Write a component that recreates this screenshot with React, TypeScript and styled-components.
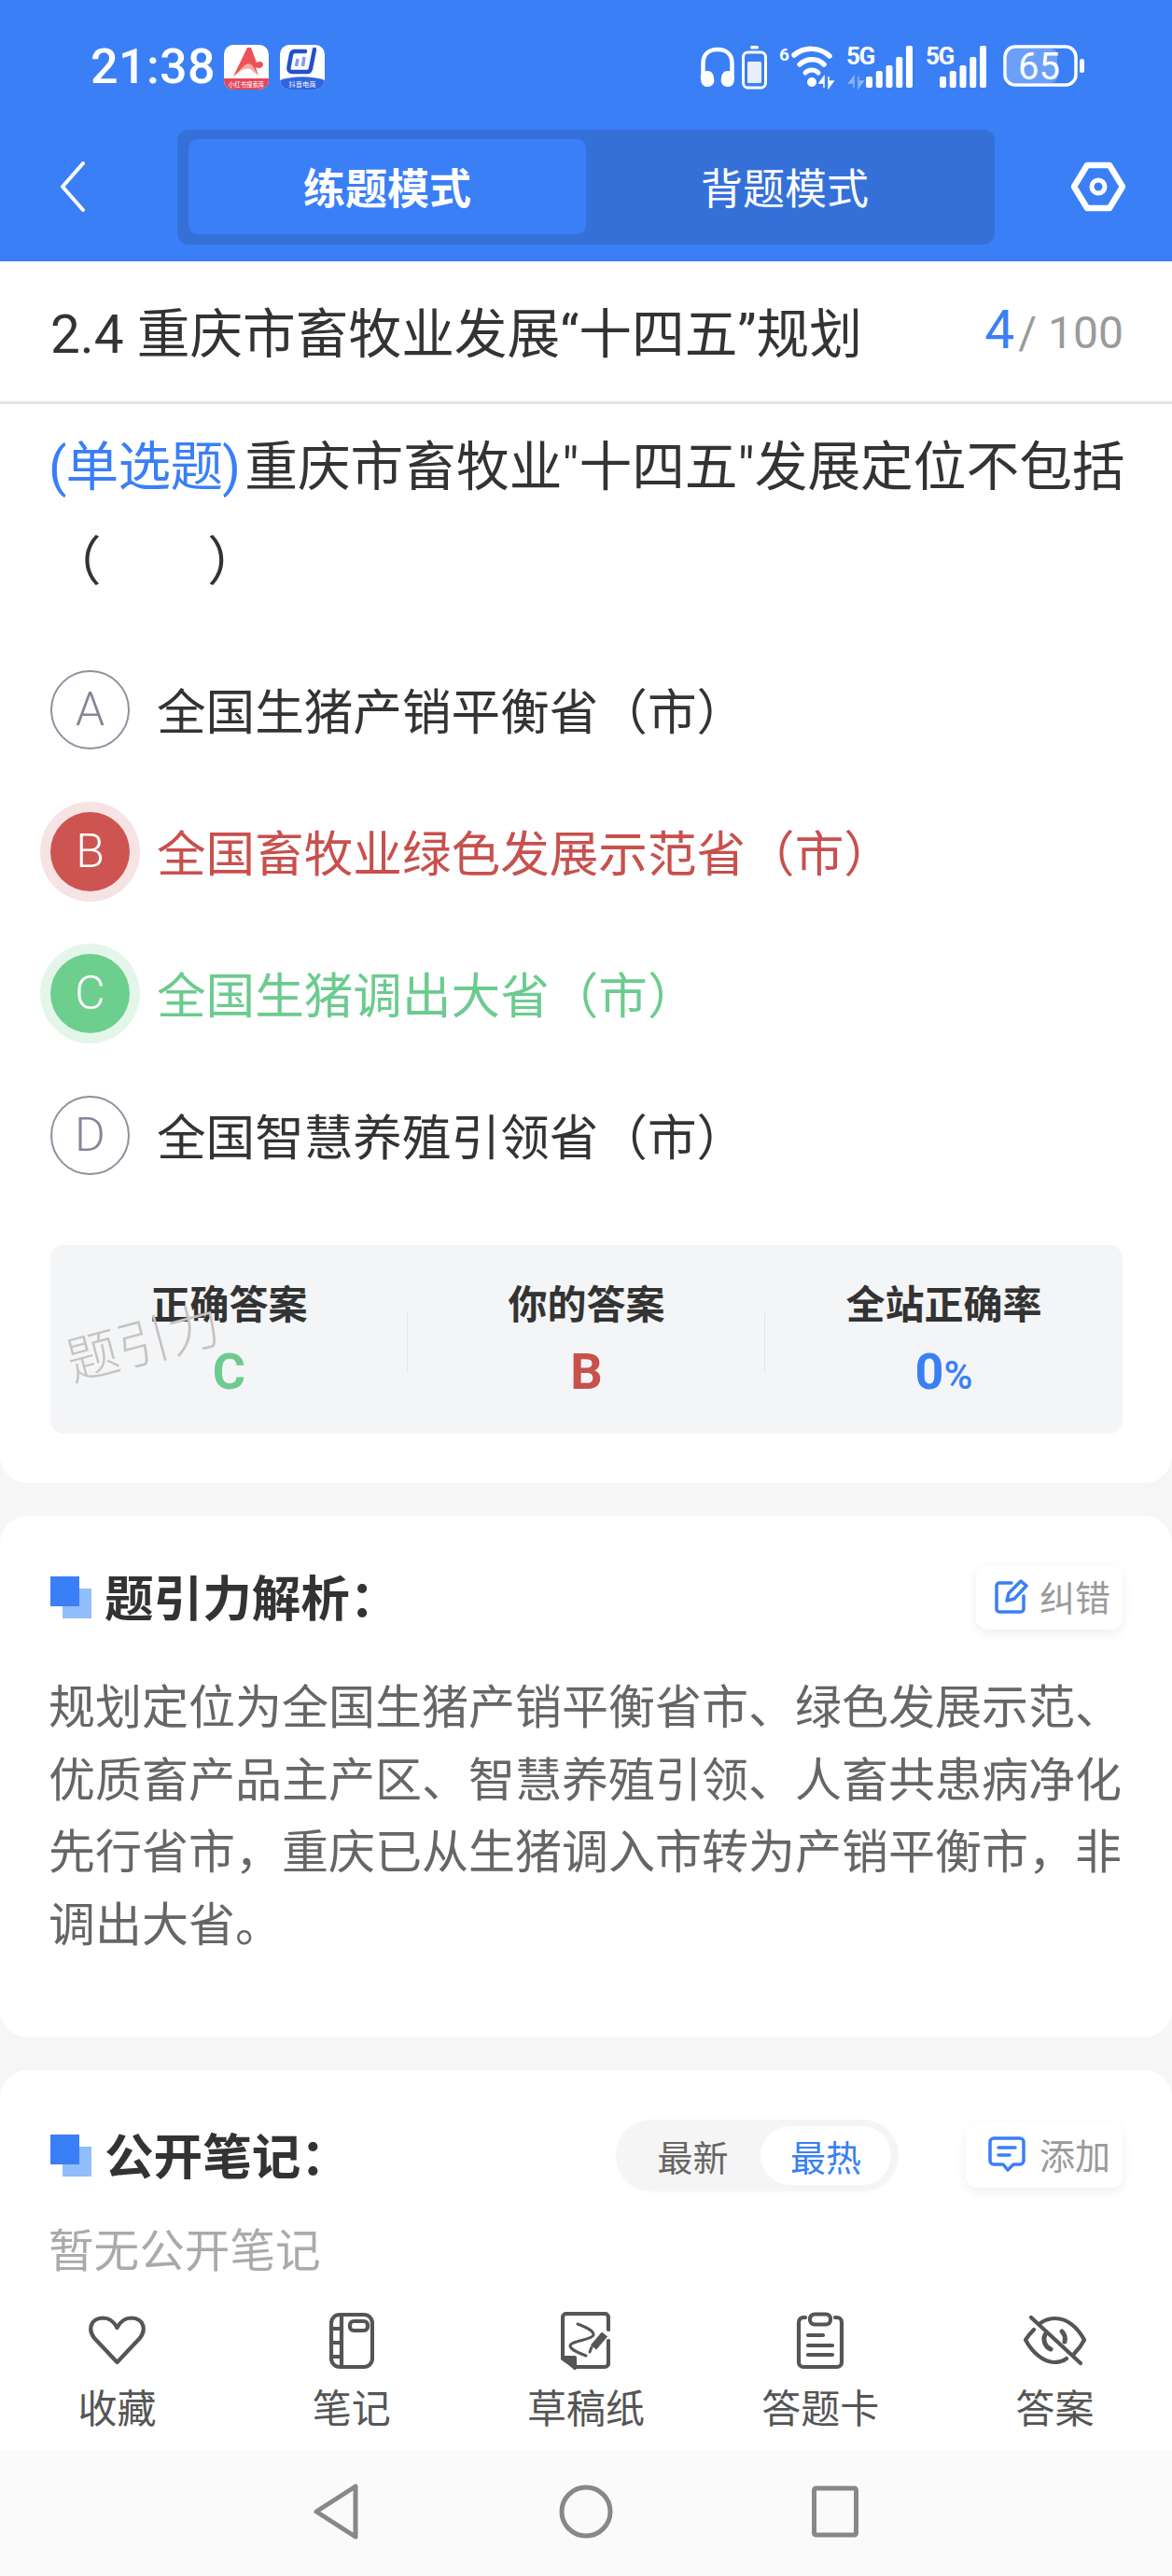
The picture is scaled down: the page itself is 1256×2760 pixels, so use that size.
import * as React from "react";
import styled, { createGlobalStyle } from "styled-components";

const blue = "#3a7ff6";
const red = "#c8504d";
const green = "#6ccb8e";

const GlobalStyle = createGlobalStyle`
  html, body {
    margin: 0;
    padding: 0;
    background: #f6f6f6;
  }
  body {
    font-family: Roboto, "Noto Sans CJK SC", sans-serif;
    color: #333;
  }
`;

const Page = styled.div`
  width: 1256px;
  height: 2760px;
  display: flex;
  flex-direction: column;
  overflow: hidden;
  background: #f6f6f6;
`;

const Scroll = styled.div`
  flex: 1;
  min-height: 0;
  overflow: hidden;
`;

const Header = styled.header`
  height: 280px;
  background: ${blue};
  color: #fff;
`;

const StatusBar = styled.div`
  height: 138px;
  box-sizing: border-box;
  padding: 48px 0 0 97px;
  display: flex;
  align-items: flex-start;
`;

const Clock = styled.div`
  width: 143px;
  font-size: 52px;
  line-height: 48px;
  font-weight: 500;
  letter-spacing: 0.4px;
`;

const AppIcon = styled.svg`
  display: block;
  width: 48px;
  height: 48px;
  margin-right: 12px;
`;

const StatusIcons = styled.div`
  margin-left: auto;
  margin-right: 94px;
  display: flex;
  align-items: flex-start;
`;

const StatusSvg = styled.svg<{ $gap?: number }>`
  display: block;
  height: 48px;
  margin-left: ${(p) => p.$gap ?? 0}px;
  flex: none;
  overflow: visible;
`;

const NavRow = styled.div`
  height: 124px;
  padding-left: 64px;
  display: flex;
  align-items: center;
`;

const Tabs = styled.div`
  width: 876px;
  height: 123px;
  margin-left: 98px;
  margin-right: 81px;
  box-sizing: border-box;
  padding: 10px 12px 11px;
  display: flex;
  background: #3570d9;
  border-radius: 12px;
`;

const Tab = styled.div<{ $active?: boolean }>`
  flex: 1;
  display: flex;
  align-items: center;
  justify-content: center;
  font-size: 45px;
  font-weight: ${(p) => (p.$active ? 700 : 400)};
  background: ${(p) => (p.$active ? blue : "transparent")};
  border-radius: 10px;
`;

const QuestionCard = styled.section`
  background: #fff;
  border-radius: 0 0 30px 30px;
  padding-bottom: 53px;
`;

const TitleRow = styled.div`
  height: 153px;
  box-sizing: border-box;
  padding: 0 52px 4px 54px;
  display: flex;
  align-items: center;
  justify-content: space-between;
  border-bottom: 3px solid #e2e2e2;
`;

const ChapterTitle = styled.div`
  font-size: 56.7px;
  color: #333;
`;

const Progress = styled.div`
  display: flex;
  align-items: baseline;
  font-size: 48px;
  color: #9a9a9a;
`;

const ProgressNow = styled.span`
  font-size: 57px;
  color: ${blue};
  margin-right: 4px;
`;

const ProgressSlash = styled.span`
  margin-right: 12px;
`;

const Question = styled.div`
  padding: 17px 48px 0 52px;
  font-size: 56.7px;
  line-height: 101px;
  color: #333;
`;

const QuestionType = styled.span`
  color: ${blue};
  letter-spacing: -0.8px;
  margin-right: 5px;
`;

const Options = styled.div`
  margin-top: 32px;
  padding-left: 54px;
`;

const OptionRow = styled.div`
  height: 152px;
  display: flex;
  align-items: center;
  gap: 29px;
`;

type OptionState = "idle" | "wrong" | "right";

const optionColor: Record<OptionState, string> = {
  idle: "#333",
  wrong: red,
  right: green,
};

const OptionBadge = styled.div<{ $state: OptionState }>`
  width: 85px;
  height: 85px;
  box-sizing: border-box;
  border-radius: 50%;
  display: flex;
  align-items: center;
  justify-content: center;
  font-size: 50px;
  font-weight: 300;
  color: ${(p) => (p.$state === "idle" ? "#86869a" : "#fff")};
  border: ${(p) => (p.$state === "idle" ? "2.5px solid #8f8f9e" : "none")};
  background: ${(p) =>
    p.$state === "wrong" ? "#cd5451" : p.$state === "right" ? "#6dcf8e" : "#fff"};
  box-shadow: ${(p) =>
    p.$state === "wrong"
      ? "0 0 0 11px #f6e3e3"
      : p.$state === "right"
      ? "0 0 0 11px #e4f6ea"
      : "none"};
`;

const OptionText = styled.div<{ $state: OptionState }>`
  padding-bottom: 3px;
  font-size: 52.6px;
  color: ${(p) => optionColor[p.$state]};
`;

const Summary = styled.div`
  position: relative;
  margin: 42px 53px 0 54px;
  height: 202px;
  box-sizing: border-box;
  padding-top: 37px;
  display: grid;
  grid-template-columns: repeat(3, 1fr);
  background: #f4f5f7;
  border-radius: 14px;
`;

const SummaryCol = styled.div<{ $divider?: boolean }>`
  position: relative;
  text-align: center;
  &::after {
    content: "";
    display: ${(p) => (p.$divider ? "block" : "none")};
    position: absolute;
    right: 0;
    top: 35px;
    width: 1px;
    height: 65px;
    background: #e6e6e8;
  }
`;

const SummaryLabel = styled.div`
  font-size: 42px;
  line-height: 56px;
  font-weight: 700;
  color: #333;
`;

const SummaryValue = styled.div<{ $color: string }>`
  margin-top: 13px;
  font-size: 54px;
  line-height: 60px;
  font-weight: 700;
  color: ${(p) => p.$color};
`;

const Percent = styled.span`
  font-size: 42px;
  font-weight: 500;
`;

const Watermark = styled.div`
  position: absolute;
  left: 16px;
  top: 71px;
  font-size: 56px;
  line-height: 70px;
  font-weight: 300;
  color: #c4c4c4;
  transform: rotate(-15deg);
`;

const Card = styled.section<{ $pb: number }>`
  margin-top: 35px;
  padding: 53px 53px ${(p) => p.$pb}px 54px;
  background: #fff;
  border-radius: 30px;
`;

const CardHead = styled.div`
  display: flex;
  align-items: center;
`;

const HeadMark = styled.div`
  position: relative;
  width: 44px;
  height: 45px;
  flex: none;
  margin-right: 14px;
  &::before,
  &::after {
    content: "";
    position: absolute;
    width: 31px;
    height: 32px;
  }
  &::before {
    left: 13px;
    top: 13px;
    background: #90bdfb;
  }
  &::after {
    left: 0;
    top: 0;
    background: ${blue};
  }
`;

const HeadTitle = styled.div`
  height: 69px;
  box-sizing: border-box;
  padding-top: 6px;
  font-size: 52.6px;
  line-height: 63px;
  font-weight: 700;
  color: #333;
`;

const ChipButton = styled.div<{ $wide?: boolean }>`
  margin-left: auto;
  height: 69px;
  width: ${(p) => (p.$wide ? 168 : 157)}px;
  box-sizing: border-box;
  padding: 0 13px 4px 0;
  display: flex;
  align-items: center;
  justify-content: flex-end;
  gap: ${(p) => (p.$wide ? 15 : 12)}px;
  font-size: 38px;
  color: #9a9a9a;
  background: #fff;
  border-radius: 12px;
  box-shadow: 0 4px 12px rgba(0, 0, 0, 0.07);
`;

const Explanation = styled.p`
  margin: 46px -1px 0 -2px;
  font-size: 50px;
  line-height: 77.5px;
  color: #666;
`;

const Segment = styled.div`
  margin-left: auto;
  width: 303px;
  height: 77px;
  box-sizing: border-box;
  padding: 7px 8px 7px 10px;
  display: flex;
  background: #f5f5f5;
  border-radius: 38px;
  box-shadow: 0 2px 6px rgba(0, 0, 0, 0.02);
`;

const SegmentItem = styled.div<{ $active?: boolean }>`
  width: ${(p) => (p.$active ? 140 : 145)}px;
  display: flex;
  align-items: center;
  justify-content: center;
  font-size: 38px;
  color: ${(p) => (p.$active ? blue : "#666")};
  background: ${(p) => (p.$active ? "#fff" : "transparent")};
  border-radius: 32px;
`;

const NotesHead = styled(CardHead)`
  height: 77px;
  ${ChipButton} {
    margin-left: 72px;
  }
`;

const EmptyNotes = styled.div`
  margin: 35px 0 0 -2px;
  font-size: 48.6px;
  line-height: 60px;
  color: #aaa;
`;

const Toolbar = styled.nav`
  height: 175px;
  flex: none;
  display: grid;
  grid-template-columns: repeat(5, 1fr);
  background: #fff;
`;

const ToolItem = styled.div`
  padding-top: 27px;
  display: flex;
  flex-direction: column;
  align-items: center;
`;

const ToolIcon = styled.svg`
  display: block;
  height: 62px;
  fill: none;
  stroke: #555;
  stroke-width: 4.2;
  stroke-linecap: round;
  stroke-linejoin: round;
`;

const ToolLabel = styled.div`
  margin-top: 15px;
  font-size: 42px;
  line-height: 56px;
  color: #555;
`;

const SystemNav = styled.div`
  height: 135px;
  flex: none;
  box-sizing: border-box;
  padding: 35px 336px 0 335px;
  display: flex;
  justify-content: space-between;
  align-items: flex-start;
  background: #fafafa;
`;

const SystemIcon = styled.svg`
  display: block;
  height: 62px;
  fill: none;
  stroke: #888;
  stroke-width: 5;
  stroke-linejoin: round;
`;

const RedApp = () => (
  <AppIcon viewBox="0 0 48 48">
    <rect width="48" height="48" rx="10" fill="#fff" />
    <path d="M0 36H48V38A10 10 0 0 1 38 48H10A10 10 0 0 1 0 38Z" fill="#e5475a" />
    <path d="M10 34L25 3H29L35 19C38 17 42 18 42 21C42 25 37 26 34 24L37 33L29 22L22 24Z" fill="#ee5157" />
    <path d="M10 34L22 22C26 19 29 20 31 23L37 33L28 26C22 24 16 29 10 34Z" fill="#f8aaa6" />
    <text x="24" y="45" fontSize="6.4" textAnchor="middle" fill="#fff" fontFamily="Noto Sans CJK SC">
      小红书搜索库
    </text>
  </AppIcon>
);

const BlueApp = () => (
  <AppIcon viewBox="0 0 48 48">
    <rect width="48" height="48" rx="10" fill="#fff" />
    <path d="M0 38C14 33 34 33 48 38A10 10 0 0 1 38 48H10A10 10 0 0 1 0 38Z" fill="#2f66e0" />
    <path
      d="M27 7H16C13.500 7 12.500 8 12 10.500L9.500 24C9 27 10 29 13 29H29C31.500 29 32.500 28 33 25.500L37 5"
      fill="none"
      stroke="#2350cc"
      strokeWidth="4.500"
      strokeLinecap="round"
    />
    <path d="M19 15L17.500 23M26 13L24.500 23" stroke="#7f9cf0" strokeWidth="3.500" fill="none" />
    <text x="24" y="45" fontSize="7.200" textAnchor="middle" fill="#fff" fontFamily="Noto Sans CJK SC">
      抖音电商
    </text>
  </AppIcon>
);

const Headphones = () => (
  <StatusSvg viewBox="0 0 38 48" style={{ width: 38 }}>
    <path d="M3.500 32V20C3.500 10 10 5 19 5S34.500 10 34.500 20V32" fill="none" stroke="#fff" strokeWidth="4.500" />
    <rect x="1" y="28" width="14" height="17" rx="6.500" fill="#fff" transform="rotate(-8 8 36)" />
    <rect x="23" y="28" width="14" height="17" rx="6.500" fill="#fff" transform="rotate(8 30 36)" />
  </StatusSvg>
);

const SmallBattery = () => (
  <StatusSvg $gap={7} viewBox="0 0 27 48" style={{ width: 27 }}>
    <rect x="9" y="1" width="9" height="3.500" rx="1.500" fill="#fff" />
    <rect x="1.500" y="8" width="24" height="38" rx="5" fill="none" stroke="#fff" strokeWidth="3" />
    <rect x="6" y="18" width="15" height="23" rx="1.500" fill="#e9eefb" />
  </StatusSvg>
);

const Wifi = () => (
  <StatusSvg $gap={13} viewBox="0 0 60 48" style={{ width: 60 }}>
    <text x="0" y="17" fontSize="19" fontWeight="700" fill="#fff" fontFamily="Roboto">
      6
    </text>
    <path d="M16 11C27 2 43 2 54 12" fill="none" stroke="#fff" strokeWidth="5.500" strokeLinecap="round" />
    <path d="M22 21C30 14 41 14 48 21" fill="none" stroke="#fff" strokeWidth="5.500" strokeLinecap="round" />
    <path d="M28 30C32 26 38 26 42 30" fill="none" stroke="#fff" strokeWidth="5" strokeLinecap="round" />
    <circle cx="35" cy="40" r="5" fill="#fff" />
    <path d="M48 46V34L43 41H48M53 34V46L58 39H53" fill="#fff" stroke="#fff" strokeWidth="1.500" />
  </StatusSvg>
);

const barHeights = [12, 18, 24, 33, 45];

const Signal = ({ gap, width, ghost }: { gap: number; width: number; ghost?: boolean }) => (
  <StatusSvg $gap={gap} viewBox={`0 0 ${width} 48`} style={{ width }}>
    <text x="0" y="21" fontSize="26" fontWeight="700" fill="#fff" fontFamily="Roboto" letterSpacing="-1.500">
      5G
    </text>
    {ghost && <path d="M8 46V34L3 41H8M13 34V46L18 39H13" fill="#8db5fa" stroke="#8db5fa" strokeWidth="1.500" />}
    {barHeights.map((h, i) => (
      <rect key={i} x={width - 50 + i * 10.75} y={46 - h} width="7" height={h} rx="2" fill="#fff" />
    ))}
  </StatusSvg>
);

const BatteryLevel = () => (
  <StatusSvg $gap={18} viewBox="0 0 87 48" style={{ width: 87 }}>
    <rect x="4" y="4" width="54" height="37" rx="7" fill="#6c9ff8" />
    <rect x="2" y="2" width="76" height="41" rx="11" fill="none" stroke="#fff" strokeWidth="3.500" />
    <text x="38.500" y="37" fontSize="40" textAnchor="middle" fill="#fff" fontFamily="Roboto">
      65
    </text>
    <rect x="82" y="15" width="5" height="15" rx="2.500" fill="#fff" />
  </StatusSvg>
);

const BackIcon = () => (
  <svg width="28" height="54" viewBox="0 0 28 54" fill="none" stroke="#fff" strokeWidth="4" strokeLinecap="round" strokeLinejoin="round">
    <path d="M25 2L3 27L25 52" />
  </svg>
);

const SettingIcon = () => (
  <svg width="60" height="54" viewBox="0 0 60 54" fill="none" stroke="#fff" strokeWidth="6.500" strokeLinejoin="round">
    <path d="M18 4H42L56 27L42 50H18L4 27Z" />
    <circle cx="30" cy="27" r="7" strokeWidth="5" />
  </svg>
);

const FixIcon = () => (
  <svg width="36" height="38" viewBox="0 0 36 38" fill="none" stroke={blue} strokeWidth="3.500" strokeLinecap="round" strokeLinejoin="round">
    <path d="M18 5H5A3 3 0 0 0 2 8V33A3 3 0 0 0 5 36H28A3 3 0 0 0 31 33V19" />
    <path d="M13 24L15 16L28 3L34 8L21 22Z" />
  </svg>
);

const AddIcon = () => (
  <svg width="40" height="38" viewBox="0 0 40 38" fill="none" stroke={blue} strokeWidth="3.500" strokeLinecap="round" strokeLinejoin="round">
    <path d="M6 2H34A4 4 0 0 1 38 6V26A4 4 0 0 1 34 30H27L21 36L16 30H6A4 4 0 0 1 2 26V6A4 4 0 0 1 6 2Z" />
    <path d="M11 12H29M11 20H23" />
  </svg>
);

const HeartIcon = () => (
  <ToolIcon viewBox="0 -4 61 62" style={{ width: 61 }}>
    <path d="M30.500 50L6 24C-1 15 2 3 15 2.500C22 2.500 27 6 30.500 13C34 6 39 2.500 46 2.500C59 3 62 15 55 24Z" />
  </ToolIcon>
);

const NoteIcon = () => (
  <ToolIcon viewBox="0 0 48 62" style={{ width: 48 }}>
    <rect x="2" y="3" width="44" height="56" rx="9" />
    <path d="M13 3V59M2 18H13M2 33H13M2 48H13" />
    <rect x="22" y="10" width="19" height="10" rx="4" />
  </ToolIcon>
);

const DraftIcon = () => (
  <ToolIcon viewBox="0 0 53 62" style={{ width: 53 }}>
    <path d="M2 50V6A4 4 0 0 1 6 2H47A4 4 0 0 1 51 6V19M51 31V55A4 4 0 0 1 47 59H15L2 50" />
    <path d="M3 49H15V60Z" fill="#555" />
    <path d="M18 13C26 16 36 20 35 25C33 30 11 31 10 36C10 41 20 44 27 47" strokeWidth="3" />
    <path d="M47 24L35 38" strokeWidth="8" strokeLinecap="butt" />
    <path d="M31 43L33 38" strokeWidth="3" />
  </ToolIcon>
);

const SheetIcon = () => (
  <ToolIcon viewBox="0 0 52 62" style={{ width: 52 }}>
    <path d="M10 6H8A5 5 0 0 0 3 11V54A5 5 0 0 0 8 59H44A5 5 0 0 0 49 54V11A5 5 0 0 0 44 6H42" />
    <rect x="15" y="2.500" width="22" height="11" rx="5" />
    <path d="M13 25H29M13 36H39M13 46H39" />
  </ToolIcon>
);

const HiddenIcon = () => (
  <ToolIcon viewBox="0 -4 67 62" style={{ width: 67 }}>
    <path d="M18 8C23 4.500 29 3 34 3C47 3 58 13 65 26C62 32 58 37 54 41" />
    <path d="M11 15C7 19 4 23 2 26C9 39 21 50 33 50C38 50 42 49 46 46" />
    <path d="M8 2L61 51" />
    <path d="M24 19C20 24 22 33 29 36M41 17C44 20 45 24 44 28" strokeWidth="5" />
  </ToolIcon>
);

const options: { key: string; text: string; state: OptionState }[] = [
  { key: "A", text: "全国生猪产销平衡省（市）", state: "idle" },
  { key: "B", text: "全国畜牧业绿色发展示范省（市）", state: "wrong" },
  { key: "C", text: "全国生猪调出大省（市）", state: "right" },
  { key: "D", text: "全国智慧养殖引领省（市）", state: "idle" },
];

const tools = [
  { label: "收藏", icon: <HeartIcon /> },
  { label: "笔记", icon: <NoteIcon /> },
  { label: "草稿纸", icon: <DraftIcon /> },
  { label: "答题卡", icon: <SheetIcon /> },
  { label: "答案", icon: <HiddenIcon /> },
];

export default function App() {
  return (
    <Page>
      <GlobalStyle />
      <Scroll>
        <Header>
          <StatusBar>
            <Clock>21:38</Clock>
            <RedApp />
            <BlueApp />
            <StatusIcons>
              <Headphones />
              <SmallBattery />
              <Wifi />
              <Signal gap={12} width={71} ghost />
              <Signal gap={14} width={65} />
              <BatteryLevel />
            </StatusIcons>
          </StatusBar>
          <NavRow>
            <BackIcon />
            <Tabs>
              <Tab $active>练题模式</Tab>
              <Tab>背题模式</Tab>
            </Tabs>
            <SettingIcon />
          </NavRow>
        </Header>

        <QuestionCard>
          <TitleRow>
            <ChapterTitle>2.4 重庆市畜牧业发展“十四五”规划</ChapterTitle>
            <Progress>
              <ProgressNow>4</ProgressNow>
              <ProgressSlash>/</ProgressSlash>
              100
            </Progress>
          </TitleRow>
          <Question>
            <QuestionType>(单选题)</QuestionType>
            重庆市畜牧业"十四五"发展定位不包括（　　）
          </Question>
          <Options>
            {options.map((o) => (
              <OptionRow key={o.key}>
                <OptionBadge $state={o.state}>{o.key}</OptionBadge>
                <OptionText $state={o.state}>{o.text}</OptionText>
              </OptionRow>
            ))}
          </Options>
          <Summary>
            <SummaryCol $divider>
              <SummaryLabel>正确答案</SummaryLabel>
              <SummaryValue $color={green}>C</SummaryValue>
            </SummaryCol>
            <SummaryCol $divider>
              <SummaryLabel>你的答案</SummaryLabel>
              <SummaryValue $color={red}>B</SummaryValue>
            </SummaryCol>
            <SummaryCol>
              <SummaryLabel>全站正确率</SummaryLabel>
              <SummaryValue $color={blue}>
                0<Percent>%</Percent>
              </SummaryValue>
            </SummaryCol>
            <Watermark>题引力</Watermark>
          </Summary>
        </QuestionCard>

        <Card $pb={81}>
          <CardHead>
            <HeadMark />
            <HeadTitle>题引力解析：</HeadTitle>
            <ChipButton>
              <FixIcon />
              纠错
            </ChipButton>
          </CardHead>
          <Explanation>
            规划定位为全国生猪产销平衡省市、绿色发展示范、优质畜产品主产区、智慧养殖引领、人畜共患病净化先行省市，重庆已从生猪调入市转为产销平衡市，非调出大省。
          </Explanation>
        </Card>

        <Card $pb={60}>
          <NotesHead>
            <HeadMark />
            <HeadTitle>公开笔记：</HeadTitle>
            <Segment>
              <SegmentItem>最新</SegmentItem>
              <SegmentItem $active>最热</SegmentItem>
            </Segment>
            <ChipButton $wide>
              <AddIcon />
              添加
            </ChipButton>
          </NotesHead>
          <EmptyNotes>暂无公开笔记</EmptyNotes>
        </Card>
      </Scroll>

      <Toolbar>
        {tools.map((t) => (
          <ToolItem key={t.label}>
            {t.icon}
            <ToolLabel>{t.label}</ToolLabel>
          </ToolItem>
        ))}
      </Toolbar>

      <SystemNav>
        <SystemIcon viewBox="0 0 50 62" style={{ width: 50 }}>
          <path d="M46 4V58L4 31Z" />
        </SystemIcon>
        <SystemIcon viewBox="0 0 58 62" style={{ width: 58 }}>
          <circle cx="29" cy="31" r="26" />
        </SystemIcon>
        <SystemIcon viewBox="0 0 50 62" style={{ width: 50 }}>
          <rect x="2.500" y="6" width="45" height="50" rx="2" />
        </SystemIcon>
      </SystemNav>
    </Page>
  );
}
